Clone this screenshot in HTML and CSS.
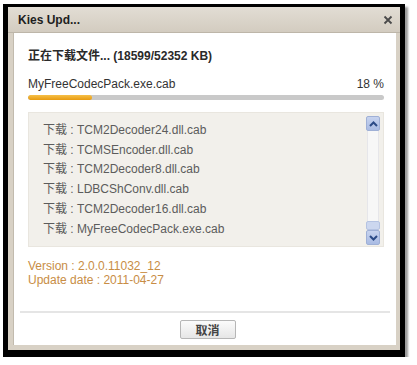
FILE: index.html
```html
<!DOCTYPE html>
<html>
<head>
<meta charset="utf-8">
<link rel="stylesheet" href="styles.css">
</head>
<body>
<div class="frame">
  <div class="titlebar">
    <span class="title">Kies Upd...</span>
    <svg class="close" width="10" height="10" viewBox="0 0 10 10"><path d="M1.5 1.5L8.5 8.5M8.5 1.5L1.5 8.5" stroke="#4a4a4a" stroke-width="1.8" fill="none"/></svg>
  </div>
  <div class="body">
    <div class="panel">
      <div class="header">正在下载文件... (18599/52352 KB)</div>
      <div class="filerow"><span>MyFreeCodecPack.exe.cab</span><span>18 %</span></div>
      <div class="progress"><div class="fill" style="width:18%"></div></div>
      <div class="listbox">
        <div class="items">
          <div>下载 : TCM2Decoder24.dll.cab</div>
          <div>下载 : TCMSEncoder.dll.cab</div>
          <div>下载 : TCM2Decoder8.dll.cab</div>
          <div>下载 : LDBCShConv.dll.cab</div>
          <div>下载 : TCM2Decoder16.dll.cab</div>
          <div>下载 : MyFreeCodecPack.exe.cab</div>
        </div>
        <div class="scrollbar">
          <div class="sbtn up"><svg width="9" height="6" viewBox="0 0 9 6"><path d="M1 5L4.5 1.5L8 5" stroke="#2b4a86" stroke-width="2" fill="none"/></svg></div>
          <div class="track"></div>
          <div class="thumb"></div>
          <div class="sbtn down"><svg width="9" height="6" viewBox="0 0 9 6"><path d="M1 1L4.5 4.5L8 1" stroke="#2b4a86" stroke-width="2" fill="none"/></svg></div>
        </div>
      </div>
      <div class="info">
        <div>Version : 2.0.0.11032_12</div>
        <div>Update date : 2011-04-27</div>
      </div>
      <div class="sep"></div>
      <div class="footer"><button class="btn">取消</button></div>
    </div>
  </div>
</div>
</body>
</html>
```
FILE: styles.css
```css
html, body { margin: 0; padding: 0; background: #fff; }
body { font-family: "Liberation Sans", Arial, "Noto Sans CJK SC", sans-serif; font-size: 12px; color: #333; }
.frame {
  margin: 4px 0 0 3px;
  width: 392px;
  height: 343px;
  border-style: solid;
  border-color: #000;
  border-width: 3px 5px 7px 5px;
  display: flex;
  flex-direction: column;
  box-shadow: 3px 3px 2px #9a9a9a;
}
.titlebar {
  height: 25px;
  border-bottom: 1px solid #bdb6a9;
  background: linear-gradient(#e2ddd4, #d3ccc0);
  display: flex;
  align-items: center;
  justify-content: space-between;
  padding: 0 7px 0 10px;
}
.title { font-weight: bold; font-size: 12px; color: #1e1e1e; }
.close { display: block; }
.body {
  flex: 1;
  display: flex;
  background: #d8d1c5;
  padding: 0 4px 5px 5px;
}
.panel {
  flex: 1;
  background: #fff;
  border-left: 1px solid #c2bbae;
  display: flex;
  flex-direction: column;
  padding: 15px 12px 0 14px;
}
.header { font-weight: bold; line-height: 16px; color: #2a2a2a; font-family: "Liberation Sans", "Noto Sans CJK SC", sans-serif; }
.filerow { margin-top: 12px; line-height: 16px; display: flex; justify-content: space-between; color: #333; }
.progress { margin-top: 3px; height: 5px; border-radius: 3px; background: #c9c9c9; overflow: hidden; }
.fill { height: 100%; background: linear-gradient(#f6c048, #e79a10); border-radius: 3px; }
.listbox {
  margin-top: 12px;
  height: 135px;
  background: #f2f0eb;
  border: 1px solid #e9e6df;
  display: flex;
  box-sizing: border-box;
}
.items { flex: 1; padding: 8px 0 0 14px; line-height: 19.7px; color: #5c5c5c; font-family: "Liberation Sans", "Noto Sans CJK SC", sans-serif; }
.scrollbar {
  width: 14px;
  margin: 3px 3px 1px 0;
  display: flex;
  flex-direction: column;
}
.sbtn {
  height: 15px;
  background: linear-gradient(#c7d3ef, #a9bbe3);
  border: 1px solid #9fb0d6;
  border-radius: 2px;
  display: flex;
  align-items: center;
  justify-content: center;
  box-sizing: border-box;
}
.sbtn svg { display: block; }
.track { flex: 1; border-left: 1px solid #e6e6ea; border-right: 1px solid #e6e6ea; margin: 0 1px; background: #f7f7f7; }
.thumb { height: 9px; background: #ccd7ef; border: 1px solid #b5c3e2; border-radius: 2px; box-sizing: border-box; }
.info { margin-top: 12px; line-height: 14px; color: #c88d45; }
.sep { margin-top: 24px; height: 2px; background: #e5e5e5; margin-left: -8px; margin-right: -6px; }
.footer { margin-top: 7px; display: flex; justify-content: center; padding-left: 3px; }
.btn {
  width: 56px;
  height: 19px;
  padding: 0;
  border: 1px solid #b6b6b6;
  border-radius: 2px;
  background: linear-gradient(#fbfbfb, #e6e6e6);
  font-family: "Noto Sans CJK SC", sans-serif;
  font-size: 12px;
  font-weight: bold;
  color: #444;
  line-height: 17px;
}
```
